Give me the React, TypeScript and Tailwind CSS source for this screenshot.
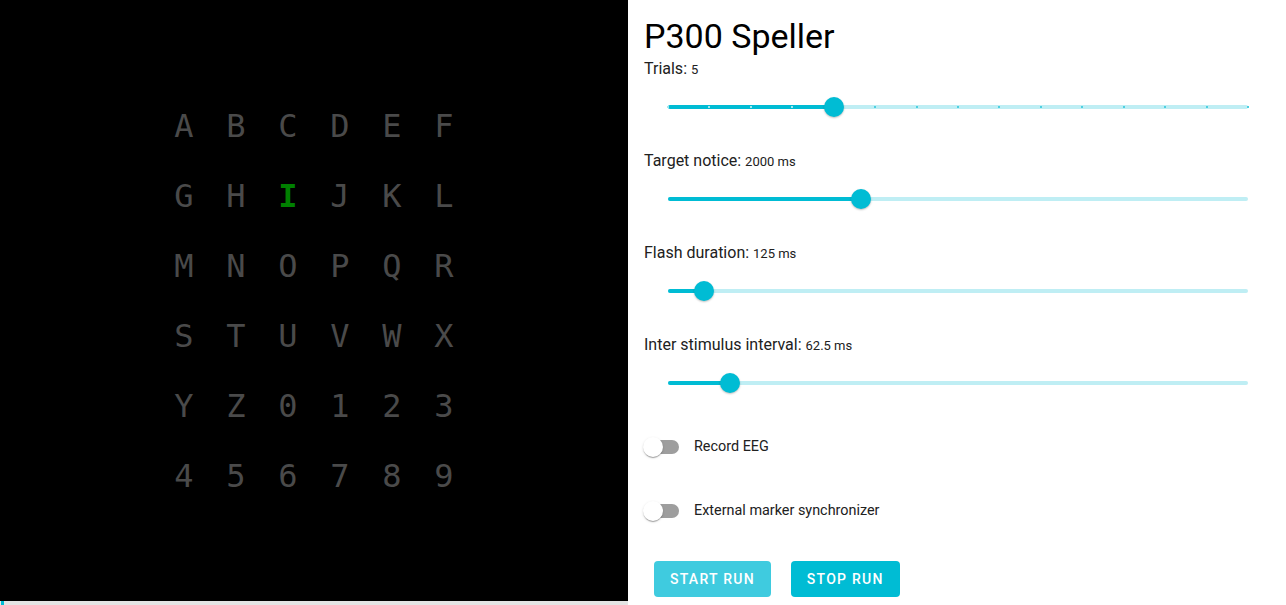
import React from "react";

const letters = [
  ["A", "B", "C", "D", "E", "F"],
  ["G", "H", "I", "J", "K", "L"],
  ["M", "N", "O", "P", "Q", "R"],
  ["S", "T", "U", "V", "W", "X"],
  ["Y", "Z", "0", "1", "2", "3"],
  ["4", "5", "6", "7", "8", "9"],
];

function Slider({ value, marks }: { value: number; marks?: number }) {
  const pct = value * 100;
  const markList = marks ? Array.from({ length: marks + 1 }, (_, i) => i / marks) : [];
  return (
    <div className="px-[24px]">
      <div className="relative h-[4px]">
        <div className="absolute inset-0 rounded-full bg-[#bfeef4]" />
        <div className="absolute left-0 top-0 h-[4px] rounded-full bg-[#00bcd4]" style={{ width: `${pct}%` }} />
        {markList.map((m, i) => (
          <div
            key={i}
            className={m <= value ? "absolute top-[1px] h-[2px] w-[2px] bg-[#9fe6ef]" : "absolute top-[1px] h-[2px] w-[2px] bg-[#4dd0e1]"}
            style={{ left: `calc(${m * 100}% - 1px)` }}
          />
        ))}
        <div
          className="absolute top-[-8px] h-[20px] w-[20px] rounded-full bg-[#00bcd4] shadow-[0_1px_2px_rgba(0,0,0,0.25)]"
          style={{ left: `calc(${pct}% - 10px)` }}
        />
      </div>
    </div>
  );
}

function SliderGroup({ label, value, pos, marks }: { label: string; value: string; pos: number; marks?: number }) {
  return (
    <div className="flex flex-col">
      <div className="h-[24px] text-[16px] leading-[24px] text-[#212121]">
        <span>{label}: </span>
        <span className="text-[13px]">{value}</span>
      </div>
      <div className="mt-[23.5px] mb-[40.5px]">
        <Slider value={pos} marks={marks} />
      </div>
    </div>
  );
}

function SwitchRow({ label, className }: { label: string; className?: string }) {
  return (
    <div className={"flex h-[38px] items-center " + (className ?? "")}>
      <div className="relative ml-[-11px] h-[38px] w-[58px]">
        <div className="absolute left-[12px] top-[12px] h-[14px] w-[34px] rounded-full bg-[#9e9e9e]" />
        <div className="absolute left-[10px] top-[9px] h-[20px] w-[20px] rounded-full bg-white shadow-[0_2px_1px_-1px_rgba(0,0,0,0.2),0_1px_1px_0_rgba(0,0,0,0.14),0_1px_3px_0_rgba(0,0,0,0.12)]" />
      </div>
      <span className="ml-[3px] text-[14.4px] text-[#212121]">{label}</span>
    </div>
  );
}

export default function App() {
  return (
    <div className="flex h-[605px] w-full overflow-hidden bg-white" style={{ fontFamily: "Roboto, 'Liberation Sans', sans-serif" }}>
      <div className="flex w-[628px] shrink-0 flex-col">
        <div className="flex h-[601px] items-center justify-center bg-black">
          <div className="grid grid-cols-6" style={{ fontFamily: "'DejaVu Sans Mono', 'Liberation Mono', monospace" }}>
            {letters.flat().map((ch) => (
              <div
                key={ch}
                className={
                  ch === "I"
                    ? "flex h-[70px] w-[52px] items-center justify-center text-[32px] font-bold text-[#008000]"
                    : "flex h-[70px] w-[52px] items-center justify-center text-[32px] text-[#4a4a4a]"
                }
              >
                {ch}
              </div>
            ))}
          </div>
        </div>
        <div className="flex h-[4px] bg-[#e4e4e4]">
          <div className="ml-[1px] h-[4px] w-[3px] bg-[#00bcd4]" />
        </div>
      </div>
      <div className="flex flex-1 flex-col pl-[16px] pr-[14px]">
        <h1 className="mt-[15px] h-[42px] text-[34px] leading-[42px] text-black">P300 Speller</h1>
        <SliderGroup label="Trials" value="5" pos={4 / 14} marks={14} />
        <SliderGroup label="Target notice" value="2000 ms" pos={0.333} />
        <SliderGroup label="Flash duration" value="125 ms" pos={0.0625} />
        <SliderGroup label="Inter stimulus interval" value="62.5 ms" pos={0.107} />
        <SwitchRow label="Record EEG" className="mt-[3px]" />
        <SwitchRow label="External marker synchronizer" className="mt-[26px]" />
        <div className="mt-[31px] flex gap-[20px] pl-[10px]">
          <button className="h-[36px] rounded-[4px] bg-[#3fcbdf] px-[16px] text-[14px] font-medium uppercase tracking-[1.25px] text-white">
            Start run
          </button>
          <button className="h-[36px] rounded-[4px] bg-[#00bcd4] px-[16px] text-[14px] font-medium uppercase tracking-[1.25px] text-white">
            Stop run
          </button>
        </div>
      </div>
    </div>
  );
}
